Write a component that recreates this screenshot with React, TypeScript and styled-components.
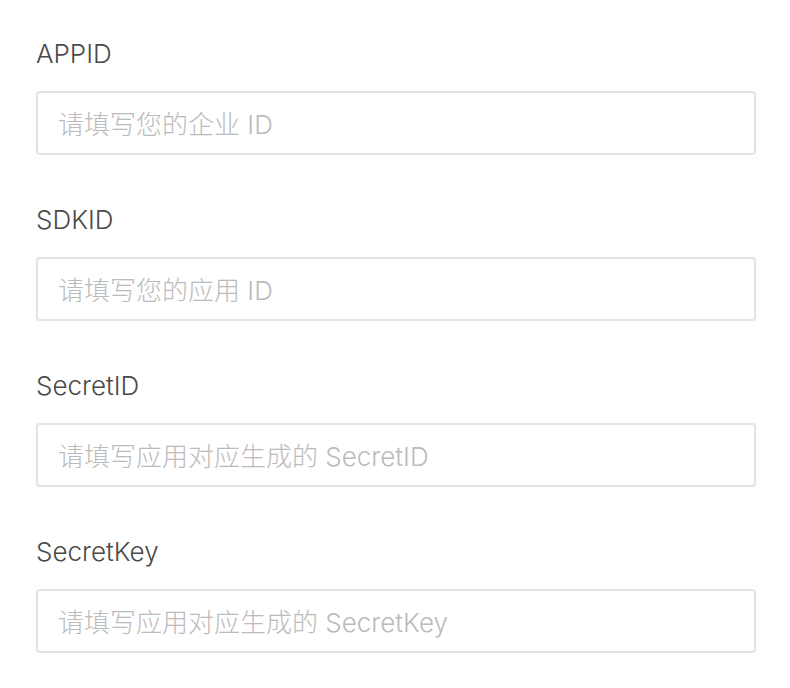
import React from "react";
import styled, { createGlobalStyle } from "styled-components";

const GlobalStyle = createGlobalStyle`
  html, body {
    margin: 0;
    padding: 0;
    background: #ffffff;
  }
  body {
    font-family: Inter, "Noto Sans CJK SC", sans-serif;
  }
`;

const Form = styled.form`
  display: flex;
  flex-direction: column;
  gap: 49px;
  width: 720px;
  padding: 38px 34px 0 36px;
`;

const Field = styled.div`
  display: flex;
  flex-direction: column;
  gap: 21px;
`;

const Label = styled.label`
  font-size: 26px;
  line-height: 32px;
  font-weight: 300;
  color: #4a4a4a;
  font-family: Inter, "Noto Sans CJK SC", sans-serif;
`;

const Input = styled.input`
  box-sizing: border-box;
  width: 720px;
  height: 64px;
  border: 2px solid #e3e3e3;
  border-radius: 4px;
  padding: 3px 20px 0 20px;
  font-size: 26px;
  font-weight: 300;
  color: #333333;
  background: #ffffff;
  outline: none;
  font-family: Inter, "Noto Sans CJK SC", sans-serif;

  &::placeholder {
    color: #bbbbbb;
  }
`;

const fields = [
  { label: "APPID", placeholder: "请填写您的企业 ID" },
  { label: "SDKID", placeholder: "请填写您的应用 ID" },
  { label: "SecretID", placeholder: "请填写应用对应生成的 SecretID" },
  { label: "SecretKey", placeholder: "请填写应用对应生成的 SecretKey" },
];

export default function App() {
  return (
    <>
      <GlobalStyle />
      <Form onSubmit={(e) => e.preventDefault()}>
        {fields.map((f) => (
          <Field key={f.label}>
            <Label htmlFor={f.label}>{f.label}</Label>
            <Input id={f.label} placeholder={f.placeholder} />
          </Field>
        ))}
      </Form>
    </>
  );
}
